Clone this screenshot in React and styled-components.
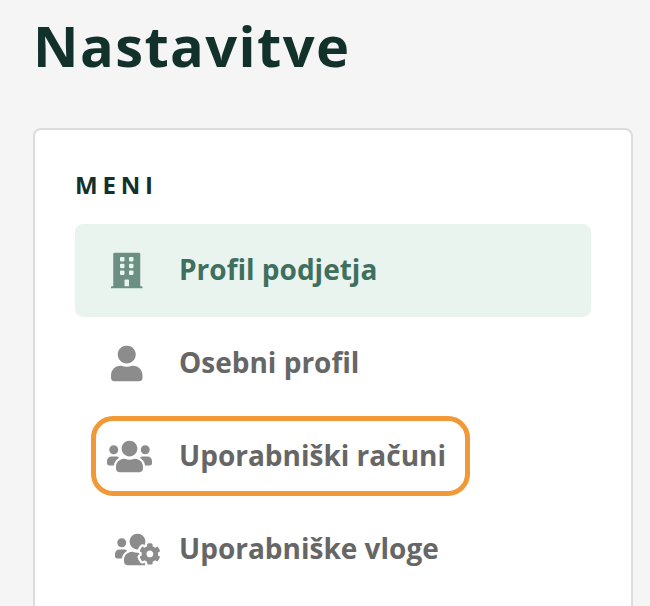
import React from "react";
import styled, { createGlobalStyle } from "styled-components";
import { FaBuilding, FaUser, FaUsers, FaUsersCog } from "react-icons/fa";

const GlobalStyle = createGlobalStyle`
  * { box-sizing: border-box; }
  html, body { margin: 0; height: 100%; overflow: hidden; }
  body {
    background: #f5f5f5;
    font-family: "Open Sans", "Noto Sans", sans-serif;
    -webkit-font-smoothing: antialiased;
  }
`;

const Page = styled.main`
  height: 606px;
  padding: 0 17px 0 33px;
  overflow: hidden;
  background: #f5f5f5;
`;

const Title = styled.h1`
  margin: 0;
  height: 128px;
  padding-top: 7px;
  font-size: 56px;
  line-height: 76px;
  font-weight: 700;
  letter-spacing: 1.4px;
  color: #12312b;
`;

const Panel = styled.section`
  height: 640px;
  padding: 39px 40px 40px;
  background: #fff;
  border: 2px solid #dcdcdc;
  border-radius: 8px;
`;

const MenuHeading = styled.h2`
  margin: 0;
  height: 55px;
  font-size: 24px;
  line-height: 32px;
  font-weight: 700;
  letter-spacing: 4.8px;
  color: #12312b;
`;

const MenuList = styled.ul`
  margin: 0;
  padding: 0;
  list-style: none;
`;

const MenuItem = styled.li`
  position: relative;
  display: flex;
  align-items: center;
  height: 93px;
  padding-bottom: 1px;
  border-radius: 8px;
  background: ${(p) => (p.$active ? "#eaf4ef" : "transparent")};
  color: ${(p) => (p.$active ? "#3f6f5f" : "#666")};
`;

const IconSlot = styled.span`
  display: flex;
  flex: none;
  width: 104px;
  padding-left: ${(p) => p.$inset}px;
  color: ${(p) => (p.$active ? "#6b8f82" : "#8c8c8c")};

  svg {
    width: ${(p) => (p.$wide ? 45 : 31.5)}px;
    height: 36px;
    transform: translateY(0.45px);
  }
`;

const Label = styled.span`
  padding-bottom: 2px;
  font-size: 28px;
  line-height: 38px;
  font-weight: 700;
  white-space: nowrap;
`;

const Highlight = styled.span`
  position: absolute;
  top: 6px;
  left: 16px;
  width: 379px;
  height: 80px;
  border: 5px solid #f19937;
  border-radius: 22px;
`;

const items = [
  { label: "Profil podjetja", Icon: FaBuilding, inset: 36, active: true },
  { label: "Osebni profil", Icon: FaUser, inset: 36 },
  { label: "Uporabniški računi", Icon: FaUsers, inset: 32, wide: true, highlighted: true },
  { label: "Uporabniške vloge", Icon: FaUsersCog, inset: 40, wide: true },
];

export default function App() {
  return (
    <>
      <GlobalStyle />
      <Page>
        <Title>Nastavitve</Title>
        <Panel>
          <MenuHeading>MENI</MenuHeading>
          <MenuList>
            {items.map(({ label, Icon, inset, active, wide, highlighted }) => (
              <MenuItem key={label} $active={active}>
                <IconSlot $inset={inset} $wide={wide} $active={active}>
                  <Icon />
                </IconSlot>
                <Label>{label}</Label>
                {highlighted && <Highlight />}
              </MenuItem>
            ))}
          </MenuList>
        </Panel>
      </Page>
    </>
  );
}
